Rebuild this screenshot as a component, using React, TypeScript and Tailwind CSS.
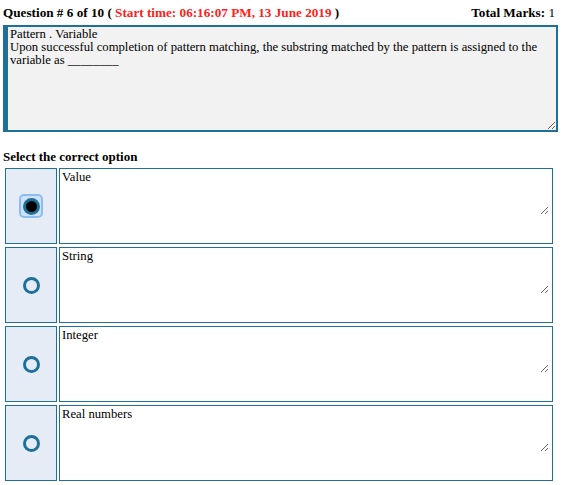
import { useState } from "react";

interface Option {
  id: number;
  label: string;
}

const options: Option[] = [
  { id: 1, label: "Value" },
  { id: 2, label: "String" },
  { id: 3, label: "Integer" },
  { id: 4, label: "Real numbers" },
];

const Radio = ({ checked }: { checked: boolean }) => {
  if (checked) {
    return (
      <span className="flex h-[24px] w-[24px] items-center justify-center rounded-[5px] border-2 border-[#8cbdf2] bg-[#cfe2fa]">
        <span className="flex h-[17px] w-[17px] items-center justify-center rounded-full bg-[#1f7099]">
          <span className="h-[11px] w-[11px] rounded-full bg-black" />
        </span>
      </span>
    );
  }
  return (
    <span className="block h-[17px] w-[17px] rounded-full border-[3.5px] border-[#1f7099]" />
  );
};

export default function App() {
  const [selected, setSelected] = useState(1);

  return (
    <div className="min-h-screen bg-white px-[3px] text-[13px] text-black [font-family:'Liberation_Serif',serif]">
      <div className="flex items-center justify-between pt-[5px] pr-[6px] text-[13.2px] leading-[15px]">
        <p className="font-bold">
          Question # 6 of 10 ({" "}
          <span className="text-[#ff2020]">
            Start time: 06:16:07 PM, 13 June 2019
          </span>{" "}
          )
        </p>
        <p className="font-bold">
          Total Marks: <span className="font-normal">1</span>
        </p>
      </div>

      <textarea
        readOnly
        value={
          "Pattern . Variable\nUpon successful completion of pattern matching, the substring matched by the pattern is assigned to the variable as ________"
        }
        className="mt-[5px] block h-[107px] w-[555px] resize-y border-2 border-l-[5px] border-[#1f7099] bg-[#f2f2f2] px-[2px] pt-[1px] text-[12.7px] leading-[13px] outline-none"
      />

      <p className="mt-[17px] font-bold leading-[15px]">
        Select the correct option
      </p>

      <div className="mt-[4px] ml-[2px] flex flex-col gap-[3px]">
        {options.map((opt) => (
          <div key={opt.id} className="flex h-[76px] gap-[2px]">
            <label className="flex w-[52px] cursor-pointer items-center justify-center border border-[#1f7099] bg-[#e5ecf6]">
              <input
                type="radio"
                name="answer"
                className="sr-only"
                checked={selected === opt.id}
                onChange={() => setSelected(opt.id)}
              />
              <Radio checked={selected === opt.id} />
            </label>
            <div className="w-[494px] border border-[#1f7099] bg-white pr-[3px]">
              <textarea
                readOnly
                value={opt.label}
                className="block h-[46px] w-full resize-y bg-white px-[2px] pt-[1px] text-[12.7px] leading-[15px] outline-none"
              />
            </div>
          </div>
        ))}
      </div>
    </div>
  );
}
